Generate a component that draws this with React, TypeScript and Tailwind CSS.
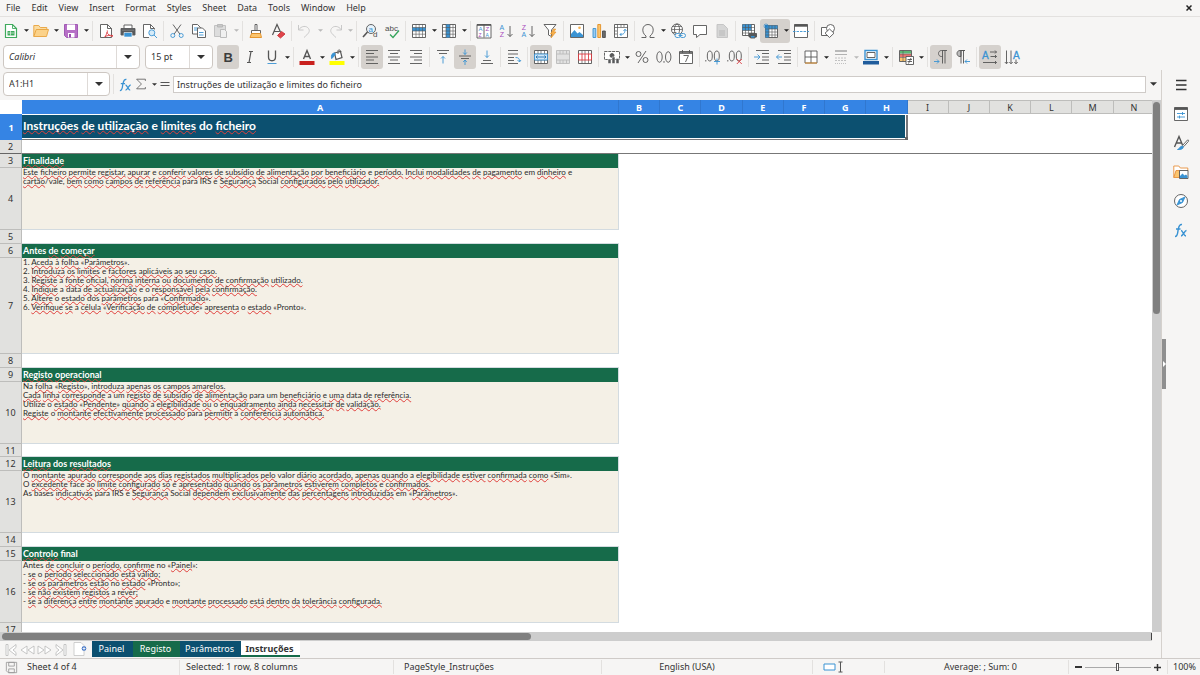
import React from 'react';

const icons: Record<string, React.ReactNode> = {
  new: (
    <>
      <path d="M2.5 1.500h7l4 4v9h-11z" fill="#fff" stroke="#3faa5c" strokeWidth="1.200" />
      <path d="M9.500 1.500v4h4" stroke="#3faa5c" />
      <path d="M4.500 8h7v4.500h-7z" fill="#3faa5c" stroke="none" />
      <path d="M5 10h6M7.500 8v4.500" stroke="#fff" strokeWidth=".6" />
    </>
  ),
  open: (
    <>
      <path d="M.8 13.500V2.500h5l1.500 2h6.500v2" fill="#fbdca0" stroke="#e8a33d" />
      <path d="M.8 13.500l2.400-7h12.300l-2 7z" fill="#fbd28a" stroke="#e8a33d" />
    </>
  ),
  save: (
    <>
      <path d="M1.500 1.500h13v13h-11l-2-2z" fill="#b66fc6" stroke="#9a4fae" />
      <path d="M4 1.500h8v5.500H4z" fill="#fff" stroke="none" />
      <path d="M5 10h6.500v4.500H5z" fill="#fff" stroke="none" />
      <path d="M6 11h2v3.500H6z" fill="#9a4fae" stroke="none" />
    </>
  ),
  pdf: (
    <>
      <path d="M2.500 1.500h7l4 4v9h-11z" fill="#fff" />
      <path d="M9.500 1.500v4h4" />
      <path d="M9 7.500c1 0 0 3-2 6.500M8.800 9c1 2.500 3 4 6 4.500M6.500 14c2-1.500 5-2 8.500-1.500" stroke="#dd3b42" />
    </>
  ),
  print: (
    <>
      <path d="M4 5.500V2h8v3.500" fill="#fff" />
      <path d="M1 5.500h14v6.500H1z" fill="#58595b" stroke="#58595b" />
      <path d="M4 9.500h8v4.500H4z" fill="#3a93d3" stroke="#fff" strokeWidth=".6" />
      <path d="M2 7.200h12" stroke="#999" strokeWidth=".6" />
    </>
  ),
  preview: (
    <>
      <path d="M7 14.500H1.500v-13h7l4 4v1" fill="#fff" />
      <path d="M8.500 1.500v4h4" />
      <circle cx="9.800" cy="9.800" r="3" fill="#d6ebf8" stroke="#3a93d3" />
      <path d="M12 12l3 3" stroke="#3a93d3" />
    </>
  ),
  cut: (
    <>
      <path d="M4 1.500l6.800 9.500M12 1.500L5.200 11" />
      <circle cx="3.800" cy="12.500" r="2" stroke="#3a93d3" />
      <circle cx="12.200" cy="12.500" r="2" stroke="#3a93d3" />
    </>
  ),
  copy: (
    <>
      <path d="M1.500 1.500h5l3 3V11h-8z" fill="#fff" />
      <path d="M3 5h4M3 7h4" stroke="#3a93d3" />
      <path d="M6.500 5h5l3 3v6.500h-8z" fill="#fff" />
      <path d="M8 9.500h4.500M8 12h4.500" stroke="#3a93d3" />
    </>
  ),
  paste: (
    <>
      <path d="M1.500 2.500h11v11h-11z" fill="#ddd" stroke="#bdbdbd" />
      <path d="M4.500 1.500h5v2.500h-5z" fill="#c8c8c8" stroke="#b5b5b5" />
      <path d="M7.500 6.500h4l2 2v6h-6z" fill="#f0f0f0" stroke="#b5b5b5" />
    </>
  ),
  clone: (
    <>
      <path d="M7 1.500h2v6H7z" fill="#fff" />
      <path d="M3.500 7.500h9v3h-9z" fill="#fff" />
      <path d="M3.500 10.500L2 14.500h11.500l-1-4z" fill="#fbc56f" stroke="#e38f22" />
    </>
  ),
  clear: (
    <>
      <path d="M2.500 12L7 1.500 10.500 9M4 8.500h5.500" strokeWidth="1.200" />
      <path d="M7.500 12.500l4-4 3.500 2.500-4.500 4z" fill="#e0454b" stroke="#c9343a" />
    </>
  ),
  undo: <path d="M1.500 2v5h5M1.500 7c3-4.500 8-4.500 10-1.500s0 5-4.500 9" stroke="#c4c4c4" />,
  redo: <path d="M14.500 2v5h-5M14.500 7c-3-4.500-8-4.500-10-1.500s0 5 4.500 9" stroke="#c4c4c4" />,
  find: (
    <>
      <circle cx="9" cy="6" r="4.500" fill="#e8f3fb" />
      <path d="M5.500 9L1 14" strokeWidth="1.600" />
      <text x="6.500" y="8.500" fontSize="8" fill="#3a93d3" stroke="none">a</text>
      <text x="11" y="14.300" fontSize="8" fill="#4d4d4d" stroke="none">d</text>
    </>
  ),
  spell: (
    <>
      <text x="1" y="7.700" fontSize="8" fill="#4d4d4d" stroke="none">abc</text>
      <path d="M6 11.500l3 3 6-7" stroke="#34a35a" strokeWidth="1.300" />
    </>
  ),
  rows: (
    <>
      <path d="M1.500 1.500h13v13h-13z" fill="#fff" />
      <path d="M1.500 4.500h13v3.500h-13z" fill="#3a93d3" stroke="none" />
      <path d="M1.500 4.500h13M1.500 8h13M1.500 11.200h13M5 1.500v13M8.200 1.500v13M11.500 1.500v13" strokeWidth=".6" />
    </>
  ),
  cols: (
    <>
      <path d="M1.500 1.500h13v13h-13z" fill="#fff" />
      <path d="M5 1.500h4v13H5z" fill="#3a93d3" stroke="none" />
      <path d="M1.500 4.500h13M1.500 8h13M1.500 11.200h13M5 1.500v13M9 1.500v13M12 1.500v13" strokeWidth=".6" />
    </>
  ),
  autosort: (
    <>
      <path d="M1 1.500h14v13.500H1z" fill="#fff" />
      <path d="M1 2h14" strokeWidth="1.600" />
      <path d="M8 1.500v13" />
      <text x="2.500" y="8.200" fontSize="6" fill="#3a93d3" stroke="none">A</text>
      <text x="2.500" y="14" fontSize="5" fill="#a84bbd" stroke="none">Z</text>
      <text x="9.500" y="8.200" fontSize="6" fill="#a84bbd" stroke="none">Z</text>
      <text x="9.500" y="14" fontSize="5" fill="#3a93d3" stroke="none">A</text>
    </>
  ),
  sortAsc: (
    <>
      <text x="1.500" y="6.600" fontSize="7" fill="#3a93d3" stroke="none">A</text>
      <text x="1.700" y="14.400" fontSize="7" fill="#a84bbd" stroke="none">Z</text>
      <path d="M12 3v10.500M9.500 11l2.500 2.500 2.500-2.500" />
    </>
  ),
  sortDesc: (
    <>
      <text x="1.700" y="6.600" fontSize="7" fill="#a84bbd" stroke="none">Z</text>
      <text x="1.500" y="14.400" fontSize="7" fill="#3a93d3" stroke="none">A</text>
      <path d="M12 3v10.500M9.500 11l2.500 2.500 2.500-2.500" />
    </>
  ),
  filter: (
    <>
      <path d="M2 1.500h12L9.500 7v6.500l-3-1.500V7z" fill="#fff" />
      <path d="M11.500 6l-3 5h2l-1.500 4 5-6h-2.300l2-3z" fill="#f7b14e" stroke="#e38f22" strokeWidth=".6" />
    </>
  ),
  image: (
    <>
      <path d="M1.500 1.500h13v13h-13z" fill="#fff" />
      <path d="M2 14v-3l3.500-4 3 3.500 2-1.500L14 12v2z" fill="#3a93d3" stroke="none" />
      <circle cx="10.500" cy="4.800" r="1.300" fill="#f7b14e" stroke="none" />
    </>
  ),
  chart: (
    <>
      <path d="M2 5.500h2.800v9H2z" fill="#9ccbee" stroke="#3a93d3" />
      <path d="M6.800 1.500h2.800v13H6.800z" fill="#fbc56f" stroke="#e38f22" />
      <path d="M11.500 8h2.800v6.500h-2.800z" fill="#6b6b6b" stroke="#4d4d4d" />
    </>
  ),
  pivot: (
    <>
      <path d="M1.500 1.500h13v13h-13z" fill="#fff" />
      <path d="M1.500 4.500h13M4.500 1.500v13M8 2v2M11 2v2M2 8h2M2 11h2" strokeWidth=".7" />
      <path d="M7 11.500c4 0 5-1.500 5-5M10.500 8L12 6.200 13.500 8M8.500 10L7 11.500 8.500 13" stroke="#3a93d3" />
    </>
  ),
  symbol: <path d="M1.500 14.500h4.500v-1.500C1 9.500 2 1.500 8 1.500s7 8 2 11.500v1.500h4.500" />,
  link: (
    <>
      <circle cx="7" cy="6.500" r="5.500" fill="#fff" />
      <ellipse cx="7" cy="6.500" rx="2.500" ry="5.500" />
      <path d="M1.500 6.500h11M2.500 3.500h9M2.500 9.500h4" strokeWidth=".7" />
      <rect x="5" y="10.500" width="5.500" height="4" rx="2" fill="#f6f5f4" stroke="#3a93d3" />
      <rect x="10" y="10.500" width="5.500" height="4" rx="2" fill="#f6f5f4" stroke="#3a93d3" />
      <path d="M8.500 12.500h4" stroke="#3a93d3" />
    </>
  ),
  comment: <path d="M1.500 2.500h13v9H8L4.500 14.500v-3h-3z" fill="#fff" />,
  headers: (
    <>
      <path d="M3 1.500h6.500l4 4v9H3z" fill="#d6d6d6" stroke="#c2c2c2" />
      <path d="M5 8h6M5 10h6M5 12h6" stroke="#b5b5b5" />
    </>
  ),
  printArea: (
    <>
      <path d="M1.500 1.500h12v11h-12z" fill="#fff" />
      <path d="M1.500 1.500h9v6h-9z" fill="#3a93d3" stroke="none" />
      <path d="M1.500 4.500h12M1.500 7.500h12M1.500 10h12M4.500 1.500v11M7.500 1.500v11M10.500 1.500v11" strokeWidth=".6" />
      <path d="M8 10.500h7.500v3.500H8z" fill="#58595b" />
      <path d="M9.500 12.500h4.500v2.500H9.500z" fill="#3a93d3" />
    </>
  ),
  freeze: (
    <>
      <path d="M2.500 2.500h12v12h-12z" fill="#fff" />
      <path d="M2.500 2.500h12v3.500H6v8.500H2.500z" fill="#3a93d3" stroke="none" />
      <path d="M2.500 6h12M2.500 9h12M2.500 12h12M6 2.500v12M9 2.500v12M12 2.500v12" strokeWidth=".6" />
      <path d="M3 .5v5M.5 3h5M1.300 1.300l3.400 3.400M4.700 1.300L1.300 4.700" stroke="#2180c8" strokeWidth=".8" />
    </>
  ),
  split: (
    <>
      <path d="M1.500 1.500h13v13h-13z" fill="#fff" />
      <path d="M1.500 2.500h13" strokeWidth="2.400" />
      <path d="M0 8.500h16" stroke="#3a93d3" strokeDasharray="2.500 1" />
    </>
  ),
  shapes: (
    <>
      <path d="M1.500 4.500h8v8h-8z" fill="#fff" />
      <circle cx="10.500" cy="5.500" r="4" fill="#fff" />
      <path d="M9.500 6l4.500 4.200-4.500 4.300L5 10.200z" fill="#fff" />
    </>
  ),
  bold: <text x="3.500" y="12.500" fontSize="13" fontWeight="700" fill="#3c3c3c" stroke="none">B</text>,
  italic: <path d="M7 2.500h4M5 13.500h4M9 2.500l-2 11" strokeWidth="1.200" />,
  underline: (
    <>
      <path d="M4.500 1.500v6.500c0 5 7 5 7 0V1.500" strokeWidth="1.300" />
      <path d="M3.500 14.500h9" stroke="#3a93d3" />
    </>
  ),
  fontColor: (
    <>
      <path d="M4.500 10L8 1.500l3.500 8.500M5.500 7.500h5" strokeWidth="1.400" />
      <path d="M.5 12h15v4H.5z" fill="#c9211e" stroke="none" />
    </>
  ),
  highlight: (
    <>
      <path d="M5.500 4l6-1.500 1.500 6-6 2z" fill="#fff" strokeWidth="1.200" />
      <path d="M9 5V2c0-2 3-1 3 1" />
      <path d="M6 4C3 4 2 6 2.500 9.500 4 9.500 4 7 6 6z" fill="#3a93d3" stroke="#3a93d3" />
      <path d="M.5 12h15v4H.5z" fill="#ff0" stroke="none" />
    </>
  ),
  alignLeft: <path d="M2 1.500h12M2 4.500h8M2 8h12M2 11h8M2 14.500h12" />,
  alignCenter: <path d="M2 1.500h12M4 4.500h8M2 8h12M4 11h8M2 14.500h12" />,
  alignRight: <path d="M2 1.500h12M6 4.500h8M2 8h12M6 11h8M2 14.500h12" />,
  alignTop: (
    <>
      <path d="M2 1.500h12M4 4.500h8" />
      <path d="M8 14.500V7.500M6 9.500l2-2 2 2" stroke="#3a93d3" />
    </>
  ),
  alignMiddle: (
    <>
      <path d="M2 7h12M4 9.500h8" />
      <path d="M8 .5v5M6.200 3.500L8 5.500l1.800-2M8 16v-5M6.200 13L8 11l1.800 2" stroke="#3a93d3" />
    </>
  ),
  alignBottom: (
    <>
      <path d="M2 14.500h12M4 11.500h8" />
      <path d="M8 1.500v7M6 6.500l2 2 2-2" stroke="#3a93d3" />
    </>
  ),
  wrap: (
    <>
      <path d="M2 1.500h10M2 5h10M2 8.500h6M2 11.500h6M2 14.500h10" />
      <path d="M9.500 8.500c3 0 4 1 4 4M11.500 11l2 2 1.500-2" stroke="#3a93d3" />
    </>
  ),
  mergeCenter: (
    <>
      <path d="M1.500 1.500h13v13h-13z" fill="#fff" />
      <path d="M1.500 5h13M1.500 11h13M5 1.500V5M8 1.500V5M11.500 1.500V5M5 11v3.500M8 11v3.500M11.500 11v3.500" strokeWidth=".7" />
      <path d="M1.500 5h13v6h-13z" fill="#cfe6f7" stroke="#3a93d3" />
      <path d="M3 8h10M4.500 6.500L3 8l1.500 1.500M11.500 6.500L13 8l-1.500 1.500" stroke="#2270ad" />
    </>
  ),
  mergeCells: (
    <>
      <path d="M1.500 1.500h13v13h-13z" fill="#e2e2e2" stroke="#bbb" />
      <path d="M1.500 5h13M1.500 11h13M5 1.500V5M8 1.500V5M11.500 1.500V5M5 11v3.500M8 11v3.500M11.500 11v3.500" stroke="#bbb" />
    </>
  ),
  splitCells: (
    <>
      <path d="M1.500 1.500h13v13h-13z" fill="#fff" />
      <path d="M5 1.500V5M8 1.500V5M11.500 1.500V5M5 11v3.500M8 11v3.500M11.500 11v3.500" strokeWidth=".7" />
      <path d="M1.500 5h13v6h-13zM5 5v6M8 5v6M11.500 5v6" stroke="#dd3b42" />
    </>
  ),
  currency: (
    <>
      <path d="M.5 2.500h15v8H.5z" fill="#fff" strokeDasharray="3 .8" />
      <circle cx="8" cy="6.500" r="2" fill="#58595b" />
      <path d="M4 10h3v4.500H4zM8 8h3v6.500H8zM12 9.500h3v5h-3z" fill="#58595b" stroke="#fff" strokeWidth=".5" />
    </>
  ),
  percent: (
    <>
      <circle cx="4.500" cy="5" r="2.500" />
      <circle cx="11.500" cy="11" r="2.500" />
      <path d="M12 2L4 14" />
    </>
  ),
  number: (
    <>
      <ellipse cx="3.500" cy="8" rx="2.700" ry="5.300" />
      <ellipse cx="12.200" cy="8" rx="2.700" ry="5.300" />
      <path d="M8 12v1.800" />
    </>
  ),
  date: (
    <>
      <path d="M1.500 2.500h13v12h-13z" fill="#fff" />
      <path d="M1.500 4h13" strokeWidth="1.600" />
      <path d="M4.500 1v3M11.500 1v3M5.500 6.500h5L7.500 13" />
    </>
  ),
  addDecimal: (
    <>
      <path d="M.8 11v1.500" />
      <ellipse cx="4.800" cy="7" rx="2.500" ry="5" />
      <ellipse cx="11.800" cy="7" rx="2.500" ry="5" />
      <path d="M12 9.500v6M9 12.500h6" stroke="#3a93d3" />
    </>
  ),
  deleteDecimal: (
    <>
      <path d="M.8 11v1.500" />
      <ellipse cx="4.800" cy="7" rx="2.500" ry="5" />
      <ellipse cx="11.800" cy="7" rx="2.500" ry="5" />
      <path d="M9.800 10l5 5M14.800 10l-5 5" stroke="#dd3b42" />
    </>
  ),
  indent: (
    <>
      <path d="M2 1.500h13M8 4.500h7M8 8h7M8 11h7M2 14.500h13" />
      <path d="M0 8h5.500M3.500 5.500L6 8l-2.500 2.500" stroke="#3a93d3" />
    </>
  ),
  outdent: (
    <>
      <path d="M2 1.500h13M8 4.500h7M8 8h7M8 11h7M2 14.500h13" />
      <path d="M.5 8H6M3 5.500L.5 8 3 10.500" stroke="#3a93d3" />
    </>
  ),
  borders: (
    <>
      <path d="M2 2h12v12H2z" fill="#fff" />
      <path d="M8 2v12M2 8h12" />
      <path d="M2 14h12" stroke="#e38f22" />
    </>
  ),
  borderStyle: (
    <>
      <path d="M2 2h12" stroke="#aaa" strokeWidth="1.600" />
      <path d="M2 5.500h12" stroke="#aaa" />
      <path d="M2 9h12M2 11.500h12" stroke="#bbb" strokeDasharray="2 1" />
      <path d="M2 14.500h12" stroke="#bbb" strokeDasharray="1 1" />
    </>
  ),
  borderColor: (
    <>
      <path d="M2 1.500h12v9H2z" fill="#fff" stroke="#3a93d3" strokeWidth="1.400" />
      <path d="M4 3.500h8v5H4z" />
      <path d="M0 12h16v3.500H0z" fill="#205c9c" stroke="none" />
    </>
  ),
  conditional: (
    <>
      <path d="M1.500 1.500h12v11h-12z" fill="#fff" />
      <path d="M2 2h11v2.500H2z" fill="#5bb974" stroke="none" />
      <path d="M2 5h11v3H2z" fill="#e9736f" stroke="none" />
      <path d="M2 8.500h6v3.500H2z" fill="#fbc56f" stroke="none" />
      <path d="M1.500 5h12M1.500 8.500h12M5 1.500v11" strokeWidth=".6" />
      <path d="M8 7.500h7.500v8H8z" fill="#fff" />
      <path d="M9.500 10.500h4.500M9.500 12.500h4.500M13 9l-2.500 5.500" />
    </>
  ),
  ltr: (
    <>
      <path d="M14 1.500H8.500c-4 0-4 6 0 6h1M9.500 1.500v13M12 1.500v13" />
      <path d="M1 12.500h5M4 10.500l2 2-2 2" stroke="#3a93d3" />
    </>
  ),
  rtl: (
    <>
      <path d="M10 1.500H5c-4 0-4 6 0 6h1V1.500z" fill="#bbb" />
      <path d="M6 1.500v13M8.500 1.500v13" />
      <path d="M15 12.500h-5M12 10.500l-2 2 2 2" stroke="#3a93d3" />
    </>
  ),
  textHorizontal: (
    <>
      <text x="0" y="9.500" fontSize="10" fill="#3a93d3" stroke="#3a93d3" strokeWidth=".3">A</text>
      <path d="M8 3h6.500M8.500 7.500h6M1 13.500h13.500M13 1.500L14.500 3 13 4.500M13 6l1.500 1.500L13 9M13 12l1.500 1.500L13 15" />
    </>
  ),
  textVertical: (
    <>
      <text x="9" y="9.500" fontSize="10" fill="#3a93d3" stroke="#3a93d3" strokeWidth=".3">A</text>
      <path d="M2.500 1.500v13M7 1.500v13M12 10.500v4M.8 13l1.700 1.800L4.200 13M5.300 13L7 14.800 8.700 13M10.300 13l1.700 1.800 1.700-1.800" />
    </>
  ),
  function: (
    <>
      <path d="M2 14.500c3 0 2.500-4 3.200-7S6 2 9 2.500M3 7h4.500" stroke="#3a93d3" strokeWidth="1.400" />
      <path d="M8 8.500c2 0 2.500 5.500 5 5.500M13.500 8.500c-2 0-3.500 5.500-5.500 5.500" stroke="#3a93d3" strokeWidth="1.400" />
    </>
  ),
  sum: <path d="M13 4.500V2.500H3L8.500 8 3 13.500h10v-2" />,
  equals: <path d="M2 6h12M2 10h12" stroke="#555" strokeWidth="1.500" />,
  menu: <path d="M3 3.500h10.500M3 8h10.500M3 12.500h10.500" stroke="#333" strokeWidth="1.500" />,
  properties: (
    <>
      <path d="M1.500 1.500h13v13h-13z" fill="#fff" />
      <path d="M1.500 2.700h13" strokeWidth="2.400" />
      <path d="M4 7.500h8M4 11h8M9.500 6v3M6.500 9.500v3" stroke="#3a93d3" />
    </>
  ),
  styles: (
    <>
      <path d="M1.500 12L6 1.500 9.500 10M3 8h6" strokeWidth="1.400" />
      <path d="M9.500 10.500l5-5.500c1.500-.5 1 1 .8 1.500l-4.500 5z" fill="#fff" />
      <path d="M4.500 14.500c2 0 2-3.500 5-3.500 2 1.500 0 4-5 3.500z" fill="#3a93d3" stroke="#3a93d3" />
    </>
  ),
  gallery: (
    <>
      <path d="M.8 13.500V2h5l1.500 2h7.500v3" fill="#fff" stroke="#e8913d" />
      <path d="M.8 13.500L3 6.500h4v7z" fill="#fbc56f" stroke="#e8913d" />
      <path d="M6.500 6.500h8.500v8H6.500z" fill="#fff" />
      <path d="M7 14v-2l2.500-2.500 2 2 1.500-1 1.500 1.500v2z" fill="#3a93d3" stroke="none" />
    </>
  ),
  navigator: (
    <>
      <circle cx="8" cy="8" r="6.500" fill="#fff" />
      <path d="M12 4l-2.500 5.500L4 12l2.500-5.500z" fill="#3a93d3" stroke="#3a93d3" />
      <circle cx="8" cy="8" r="1" fill="#fff" stroke="none" />
    </>
  ),
  document: (
    <>
      <path d="M2.500 2.500h11v11h-9l-2-2z" stroke="#999" />
      <path d="M5 2.500h6v4H5zM5 9.500h6v4H5z" stroke="#999" />
    </>
  ),
};

function Icon({ name, className = 'size-4' }: { name: string; className?: string }) {
  return (
    <svg
      viewBox="0 0 16 16"
      className={`${className} shrink-0 overflow-visible font-['Liberation_Sans',sans-serif]`}
      fill="none"
      stroke="#555"
      strokeWidth=".9"
    >
      {icons[name]}
    </svg>
  );
}

function Caret({ className }: { className: string }) {
  return (
    <svg viewBox="0 0 8 4" className={className} fill="currentColor">
      <path d="M0 0h8L4 4z" />
    </svg>
  );
}

interface Tool {
  icon: string;
  label: string;
  menu?: boolean;
  active?: boolean;
  disabled?: boolean;
}

const standardTools: Tool[][] = [
  [
    { icon: 'new', label: 'New', menu: true },
    { icon: 'open', label: 'Open', menu: true },
    { icon: 'save', label: 'Save', menu: true },
  ],
  [
    { icon: 'pdf', label: 'Export as PDF' },
    { icon: 'print', label: 'Print' },
    { icon: 'preview', label: 'Print Preview' },
  ],
  [
    { icon: 'cut', label: 'Cut' },
    { icon: 'copy', label: 'Copy' },
    { icon: 'paste', label: 'Paste', menu: true, disabled: true },
  ],
  [
    { icon: 'clone', label: 'Clone Formatting' },
    { icon: 'clear', label: 'Clear Direct Formatting' },
  ],
  [
    { icon: 'undo', label: 'Undo', menu: true, disabled: true },
    { icon: 'redo', label: 'Redo', menu: true, disabled: true },
  ],
  [
    { icon: 'find', label: 'Find and Replace' },
    { icon: 'spell', label: 'Spelling' },
  ],
  [
    { icon: 'rows', label: 'Row', menu: true },
    { icon: 'cols', label: 'Column', menu: true },
  ],
  [
    { icon: 'autosort', label: 'Sort' },
    { icon: 'sortAsc', label: 'Sort Ascending' },
    { icon: 'sortDesc', label: 'Sort Descending' },
    { icon: 'filter', label: 'AutoFilter' },
  ],
  [
    { icon: 'image', label: 'Insert Image' },
    { icon: 'chart', label: 'Insert Chart' },
    { icon: 'pivot', label: 'Insert Pivot Table' },
  ],
  [
    { icon: 'symbol', label: 'Special Character', menu: true },
    { icon: 'link', label: 'Insert Hyperlink' },
    { icon: 'comment', label: 'Insert Comment' },
    { icon: 'headers', label: 'Headers and Footers', disabled: true },
  ],
  [
    { icon: 'printArea', label: 'Define Print Area' },
    { icon: 'freeze', label: 'Freeze Rows and Columns', menu: true, active: true },
    { icon: 'split', label: 'Split Window' },
  ],
  [{ icon: 'shapes', label: 'Show Draw Functions' }],
];

const formattingTools: Tool[][] = [
  [
    { icon: 'bold', label: 'Bold', active: true },
    { icon: 'italic', label: 'Italic' },
    { icon: 'underline', label: 'Underline', menu: true },
  ],
  [
    { icon: 'fontColor', label: 'Font Color', menu: true },
    { icon: 'highlight', label: 'Background Color', menu: true },
  ],
  [
    { icon: 'alignLeft', label: 'Align Left', active: true },
    { icon: 'alignCenter', label: 'Center Horizontally' },
    { icon: 'alignRight', label: 'Align Right' },
  ],
  [
    { icon: 'alignTop', label: 'Align Top' },
    { icon: 'alignMiddle', label: 'Center Vertically', active: true },
    { icon: 'alignBottom', label: 'Align Bottom' },
  ],
  [{ icon: 'wrap', label: 'Wrap Text' }],
  [
    { icon: 'mergeCenter', label: 'Merge and Center Cells', active: true },
    { icon: 'mergeCells', label: 'Merge Cells', disabled: true },
    { icon: 'splitCells', label: 'Unmerge Cells' },
  ],
  [
    { icon: 'currency', label: 'Format as Currency', menu: true },
    { icon: 'percent', label: 'Format as Percent' },
    { icon: 'number', label: 'Format as Number' },
    { icon: 'date', label: 'Format as Date' },
  ],
  [
    { icon: 'addDecimal', label: 'Add Decimal Place' },
    { icon: 'deleteDecimal', label: 'Delete Decimal Place' },
  ],
  [
    { icon: 'indent', label: 'Increase Indent' },
    { icon: 'outdent', label: 'Decrease Indent' },
  ],
  [
    { icon: 'borders', label: 'Borders', menu: true },
    { icon: 'borderStyle', label: 'Border Style', menu: true, disabled: true },
    { icon: 'borderColor', label: 'Border Color', menu: true },
  ],
  [{ icon: 'conditional', label: 'Conditional Formatting', menu: true }],
  [
    { icon: 'ltr', label: 'Left-To-Right', active: true },
    { icon: 'rtl', label: 'Right-To-Left' },
  ],
  [
    { icon: 'textHorizontal', label: 'Text direction from left to right', active: true },
    { icon: 'textVertical', label: 'Text direction from top to bottom' },
  ],
];

function ToolGroups({ groups }: { groups: Tool[][] }) {
  return (
    <div className="flex items-center">
      {groups.map((group, i) => (
        <React.Fragment key={i}>
          {i > 0 && <div className="mx-0.5 h-5 w-px bg-[#e3e1df]" />}
          {group.map((tool) => (
            <div key={tool.icon} className={`flex h-6 rounded-[3px] ${tool.active ? 'bg-[#d5d1cd]' : ''}`}>
              <button
                type="button"
                aria-label={tool.label}
                disabled={tool.disabled}
                className="flex w-[22px] items-center justify-center"
              >
                <Icon name={tool.icon} />
              </button>
              {tool.menu && (
                <button
                  type="button"
                  aria-label={`${tool.label} options`}
                  disabled={tool.disabled}
                  className={`flex w-2 items-center justify-center ${tool.disabled ? 'text-[#b9b9b9]' : 'text-[#222]'}`}
                >
                  <Caret className="h-[3px] w-[5px]" />
                </button>
              )}
            </div>
          ))}
        </React.Fragment>
      ))}
    </div>
  );
}

function Combo({ label, value, className }: { label: string; value: string; className: string }) {
  return (
    <div className={`relative h-6 rounded border border-[#cdc7c2] bg-white ${className}`}>
      <select aria-label={label} className="h-full w-full appearance-none px-[5px] outline-none">
        <option>{value}</option>
      </select>
      <div className="pointer-events-none absolute inset-y-0 right-0 flex w-[23px] items-center justify-center border-l border-[#dedad7]">
        <Caret className="h-1 w-2" />
      </div>
    </div>
  );
}

const menus = ['File', 'Edit', 'View', 'Insert', 'Format', 'Styles', 'Sheet', 'Data', 'Tools', 'Window', 'Help'];
const columns = ['A', 'B', 'C', 'D', 'E', 'F', 'G', 'H', 'I', 'J', 'K', 'L', 'M', 'N'];
const title = 'Instruções de utilização e limites do ficheiro';

interface Row {
  kind: 'heading' | 'body' | 'blank';
  height: string;
  lines?: string[];
}

const rows: Row[] = [
  { kind: 'heading', height: 'h-[14px]', lines: ['Finalidade'] },
  {
    kind: 'body',
    height: 'h-[62px]',
    lines: [
      'Este ficheiro permite registar, apurar e conferir valores de subsídio de alimentação por beneficiário e período. Inclui modalidades de pagamento em dinheiro e',
      'cartão/vale, bem como campos de referência para IRS e Segurança Social configurados pelo utilizador.',
    ],
  },
  { kind: 'blank', height: 'h-[14px]' },
  { kind: 'heading', height: 'h-[14px]', lines: ['Antes de começar'] },
  {
    kind: 'body',
    height: 'h-[96px]',
    lines: [
      '1. Aceda à folha «Parâmetros».',
      '2. Introduza os limites e factores aplicáveis ao seu caso.',
      '3. Registe a fonte oficial, norma interna ou documento de confirmação utilizado.',
      '4. Indique a data de actualização e o responsável pela confirmação.',
      '5. Altere o estado dos parâmetros para «Confirmado».',
      '6. Verifique se a célula «Verificação de completude» apresenta o estado «Pronto».',
    ],
  },
  { kind: 'blank', height: 'h-[14px]' },
  { kind: 'heading', height: 'h-[14px]', lines: ['Registo operacional'] },
  {
    kind: 'body',
    height: 'h-[62px]',
    lines: [
      'Na folha «Registo», introduza apenas os campos amarelos.',
      'Cada linha corresponde a um registo de subsídio de alimentação para um beneficiário e uma data de referência.',
      'Utilize o estado «Pendente» quando a elegibilidade ou o enquadramento ainda necessitar de validação.',
      'Registe o montante efectivamente processado para permitir a conferência automática.',
    ],
  },
  { kind: 'blank', height: 'h-[13px]' },
  { kind: 'heading', height: 'h-[14px]', lines: ['Leitura dos resultados'] },
  {
    kind: 'body',
    height: 'h-[62px]',
    lines: [
      'O montante apurado corresponde aos dias registados multiplicados pelo valor diário acordado, apenas quando a elegibilidade estiver confirmada como «Sim».',
      'O excedente face ao limite configurado só é apresentado quando os parâmetros estiverem completos e confirmados.',
      'As bases indicativas para IRS e Segurança Social dependem exclusivamente das percentagens introduzidas em «Parâmetros».',
    ],
  },
  { kind: 'blank', height: 'h-[14px]' },
  { kind: 'heading', height: 'h-[14px]', lines: ['Controlo final'] },
  {
    kind: 'body',
    height: 'h-[62px]',
    lines: [
      'Antes de concluir o período, confirme no «Painel»:',
      '- se o período seleccionado está válido;',
      '- se os parâmetros estão no estado «Pronto»;',
      '- se não existem registos a rever;',
      '- se a diferença entre montante apurado e montante processado está dentro da tolerância configurada.',
    ],
  },
  { kind: 'blank', height: 'h-[14px]' },
];

// words the English dictionary accepts, everything else gets the red wave
const knownWords = new Set([
  'a', 'e', 'o', 'é', 'em', 'um', 'as', 'do', 'no', 'na', 'dos', 'para', 'face', 'data', 'valor', 'bases',
  'irs', 'social', 'final', 'antes', 'pronto', 'sim', 'vale', 'utilize',
]);

function Spelled({ text }: { text: string }) {
  return (
    <>
      {text.split(/(\p{L}+[.,;:]?)/u).map((part, i) => {
        const word = part.replace(/[.,;:]/g, '').toLowerCase();
        if (i % 2 === 0 || knownWords.has(word)) return part;
        return (
          <span key={i} className="underline decoration-[#e0403c] decoration-wavy decoration-1 underline-offset-0 [text-decoration-skip-ink:none]">
            {part}
          </span>
        );
      })}
    </>
  );
}

function Sheet() {
  return (
    <table className="w-[calc(100%+3px)] table-fixed border-separate border-spacing-0 text-[9px] leading-[9px] text-[#333]">
      <colgroup>
        <col className="w-[22px]" />
        <col className="w-[597px]" />
      </colgroup>
      <thead>
        <tr className="h-[14px]">
          <td className="p-0" />
          {columns.map((col, i) => (
            <th
              key={col}
              scope="col"
              className={
                i < 8
                  ? 'border-r border-[#3077cf] bg-[#3584e4] p-0 font-bold text-white'
                  : 'border border-l-0 border-[#bdbdbb] bg-[#e1e1df] p-0 font-normal'
              }
            >
              {col}
            </th>
          ))}
        </tr>
      </thead>
      <tbody>
        <tr className="h-[26px]">
          <th scope="row" className="bg-[#3584e4] p-0 font-bold text-white">1</th>
          <td colSpan={8} className="relative border-t border-white bg-white p-0 align-top">
            <div className="border-r-2 border-b border-[#77777b]">
              <div className="h-6 border-r border-b border-white bg-[#0c5070] pl-px font-[Lato] text-xs leading-[22px] font-bold whitespace-nowrap text-white">
                <Spelled text={title} />
              </div>
            </div>
            <div className="absolute right-0 bottom-0 size-[3px] bg-[#666]" />
          </td>
          <td colSpan={6} className="bg-white p-0" />
        </tr>
        <tr className="h-[14px]">
          <th scope="row" className="border-r border-b border-[#666] border-r-[#bdbdbb] bg-[#e1e1df] p-0 font-normal">2</th>
          <td colSpan={14} className="border-b border-[#777] bg-white p-0" />
        </tr>
        {rows.map((row, i) => (
          <tr key={i} className={row.height}>
            <th scope="row" className="border-r border-b border-[#bdbdbb] bg-[#e1e1df] p-0 font-normal">{i + 3}</th>
            {row.kind === 'heading' && (
              <td className="border-r border-[#d3dbe0] bg-[#166b4a] bg-clip-padding p-0 pl-px align-top font-[Lato] leading-[13px] font-bold whitespace-nowrap text-white">
                <Spelled text={row.lines![0]} />
              </td>
            )}
            {row.kind === 'body' && (
              <td className="border-r border-b border-[#d3dbe0] bg-[#f4f0e6] p-0 pl-px align-top font-[Lato] text-[8px] whitespace-nowrap text-[#2a2a2a]">
                {row.lines!.map((line) => (
                  <p key={line} className="h-[9px] leading-[9px]">
                    <Spelled text={line} />
                  </p>
                ))}
              </td>
            )}
            {row.kind === 'blank' && <td className="border-b border-[#d3dbe0] bg-white p-0" />}
            <td colSpan={13} className="bg-white p-0" />
          </tr>
        ))}
      </tbody>
    </table>
  );
}

const sheetTabs = [
  { name: 'Painel', className: 'w-[41px] bg-[#0c5070] text-white' },
  { name: 'Registo', className: 'w-[47px] bg-[#166b4a] text-white' },
  { name: 'Parâmetros', className: 'w-[61px] bg-[#0c5070] text-white' },
  { name: 'Instruções', className: 'w-[59px] border-b-2 border-[#166b4a] bg-white font-bold' },
];

const sideTools = ['menu', 'properties', 'styles', 'gallery', 'navigator', 'function'];

function SheetTabs() {
  return (
    <div className="flex h-[17px] shrink-0 items-start">
      <svg viewBox="0 0 62 14" className="mt-0.5 ml-[5px] h-3.5 w-[62px]" fill="#fff" stroke="#b9b9b9" strokeWidth=".8">
        <path d="M1 1.500h2v11H1zM11 1.500L4 7l7 5.500v-3L8 7l3-2.500zM22 3l-6 4 6 4zM29 3l-6 4 6 4zM33 3l6 4-6 4zM40 3l6 4-6 4zM51 1.500L58 7l-7 5.500v-3L54 7l-3-2.500zM59 1.500h2v11h-2z" />
      </svg>
      <button type="button" aria-label="Add Sheet" className="mr-1 ml-1.5 flex h-4 w-[15px] items-center">
        <svg viewBox="0 0 15 16" className="h-4 w-[15px]" fill="#fff" stroke="#c4c4c4" strokeWidth=".8">
          <path d="M1 1.500h7l3 3v10H1z" />
          <circle cx="11" cy="7.500" r="2.300" fill="#3a6fc4" stroke="none" />
          <path d="M11 6v3M9.500 7.500h3" stroke="#fff" />
        </svg>
      </button>
      {sheetTabs.map((tab) => (
        <button key={tab.name} type="button" className={`h-4 pr-0.5 text-center leading-4 ${tab.className}`}>
          {tab.name}
        </button>
      ))}
    </div>
  );
}

function StatusBar() {
  return (
    <footer className="flex h-[17px] shrink-0 items-center border-t border-[#cfcbc8]">
      <div className="flex w-[180px] items-center gap-2 border-r border-[#e3e1df] pl-1">
        <Icon name="document" className="size-[15px]" />
        Sheet 4 of 4
      </div>
      <div className="w-[214px] border-r border-[#e3e1df] pl-1.5">Selected: 1 row, 8 columns</div>
      <div className="w-[208px] border-r border-[#e3e1df] pl-2.5">PageStyle_Instruções</div>
      <div className="grow border-r border-[#e3e1df] text-center">
        <span className="pr-10">English (USA)</span>
      </div>
      <div className="flex w-[72px] items-center border-r border-[#e3e1df] pl-2.5">
        <svg viewBox="0 0 20 12" className="h-3 w-5" fill="none" strokeWidth="1">
          <path d="M1 3h11v6H1z" fill="#fff" stroke="#3a93d3" />
          <path d="M15.500 1h4M15.500 11h4M17.500 1v10" stroke="#555" />
        </svg>
      </div>
      <div className="w-[184px] border-r border-[#e3e1df] pl-2 text-center">Average: ; Sum: 0</div>
      <div className="flex items-center gap-[3px] px-1.5 text-[#222]">
        <button type="button" aria-label="Zoom out" className="flex h-3 w-[7px] items-center">
          <span className="h-[2px] w-full bg-[#333]" />
        </button>
        <input
          type="range"
          aria-label="Zoom"
          defaultValue="49"
          className="h-3 w-[66px] appearance-none bg-[linear-gradient(#aaa,#aaa)] bg-[length:100%_1px] bg-center bg-no-repeat [&::-webkit-slider-thumb]:h-2 [&::-webkit-slider-thumb]:w-[3px] [&::-webkit-slider-thumb]:appearance-none [&::-webkit-slider-thumb]:border [&::-webkit-slider-thumb]:border-[#555] [&::-webkit-slider-thumb]:bg-white"
        />
        <button type="button" aria-label="Zoom in" className="flex h-3 w-[7px] items-center">
          <svg viewBox="0 0 7 7" className="size-[7px]" stroke="#333" strokeWidth="1.500">
            <path d="M0 3.500h7M3.500 0v7" />
          </svg>
        </button>
      </div>
      <div className="w-[33px] border-l border-[#e3e1df] pl-[5px]">100%</div>
    </footer>
  );
}

export default function App() {
  return (
    <div className="flex h-screen flex-col overflow-hidden bg-[#f6f5f4] font-['Noto_Sans',sans-serif] text-[9px] text-[#333]">
      <nav className="flex h-[17px] shrink-0 items-center gap-[11px] border-b border-[#e3e1df] pl-1.5">
        {menus.map((menu) => (
          <button key={menu} type="button">{menu}</button>
        ))}
        <button type="button" aria-label="Close" className="mr-2 ml-auto">
          <svg viewBox="0 0 6 6" className="size-1.5" stroke="#222" strokeWidth="1.500">
            <path d="M.5 .5l5 5M5.500 .5l-5 5" />
          </svg>
        </button>
      </nav>
      <div className="flex h-[27px] shrink-0 items-center">
        <ToolGroups groups={standardTools} />
      </div>
      <div className="flex h-[26px] shrink-0 items-center pl-[3px]">
        <Combo label="Font Name" value="Calibri" className="mr-[5px] w-[137px] italic" />
        <Combo label="Font Size" value="15 pt" className="mr-1 w-[68px]" />
        <ToolGroups groups={formattingTools} />
      </div>

      <div className="flex min-h-0 grow">
        <main className="flex min-w-0 grow flex-col">
          <div className="flex h-[30px] shrink-0 items-start pt-0.5 pl-[3px]">
            <div className="flex h-6 w-[107px] rounded border border-[#cdc7c2] bg-white">
              <input aria-label="Name Box" defaultValue="A1:H1" className="w-[83px] pl-[5px] outline-none" />
              <button type="button" aria-label="Name Box list" className="flex grow items-center justify-center border-l border-[#dedad7]">
                <Caret className="h-1 w-2" />
              </button>
            </div>
            <div className="flex h-6 grow items-center">
              <div className="mr-1 ml-[3px] h-5 w-px bg-[#e3e1df]" />
              <button type="button" aria-label="Function Wizard" className="w-4">
                <Icon name="function" className="size-[15px]" />
              </button>
              <button type="button" aria-label="Select Function" className="flex w-6 items-center gap-1">
                <Icon name="sum" className="size-3.5" />
                <Caret className="h-[3px] w-[5px] shrink-0" />
              </button>
              <button type="button" aria-label="Formula" className="mx-px w-[13px]">
                <Icon name="equals" className="size-3" />
              </button>
              <input
                aria-label="Input line"
                defaultValue={title}
                className="h-[17px] min-w-0 grow border border-[#cfcbc8] bg-white px-[3px] outline-none"
              />
              <button type="button" aria-label="Expand Formula Bar" className="flex w-[15px] justify-center">
                <Caret className="h-1 w-[7px]" />
              </button>
            </div>
          </div>

          <div className="flex min-h-0 grow">
            <div className="min-w-0 grow overflow-hidden bg-white">
              <Sheet />
            </div>
            <div className="w-[9px] shrink-0 bg-[#cdcdcd] px-px pt-0.5">
              <div className="h-[40%] rounded-full bg-[#7f7f7f]" />
            </div>
          </div>
          <div className="mr-[9px] flex h-[9px] shrink-0 items-center bg-[#cdcdcd] pl-0.5">
            <div className="h-[7px] w-[46%] rounded-full bg-[#7f7f7f]" />
            <div className="ml-auto h-[7px] w-px bg-[#444]" />
          </div>
          <SheetTabs />
        </main>

        <aside className="relative flex w-[39px] shrink-0 flex-col items-center border-l border-[#d5d1cd]">
          {sideTools.map((tool) => (
            <button key={tool} type="button" aria-label={tool} className="flex h-[29px] w-full items-center justify-center">
              <Icon name={tool} />
            </button>
          ))}
          <button
            type="button"
            aria-label="Hide sidebar"
            className="absolute top-[269px] left-0 flex h-[50px] w-1 items-center justify-center bg-[#8f8f8f]"
          >
            <svg viewBox="0 0 3 6" className="h-1.5 w-[3px]" fill="#fff">
              <path d="M0 0l3 3-3 3z" />
            </svg>
          </button>
        </aside>
      </div>
      <StatusBar />
    </div>
  );
}
